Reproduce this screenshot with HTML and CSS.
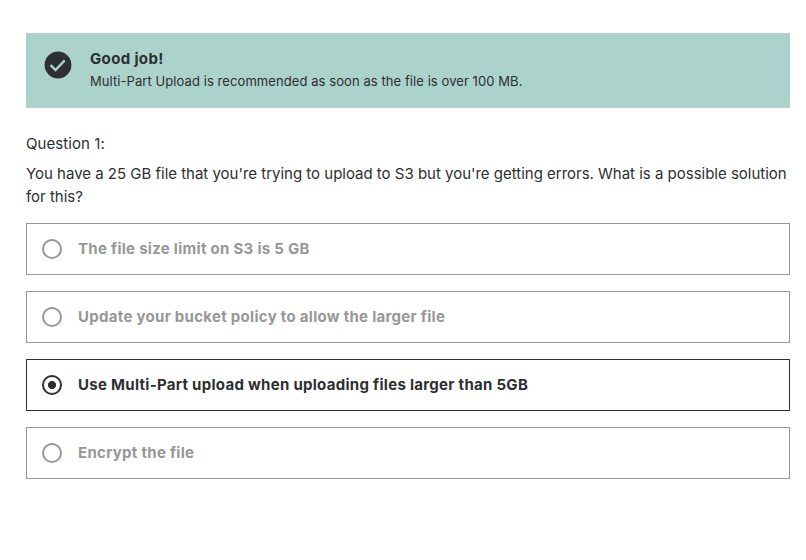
FILE: index.html
```html
<!DOCTYPE html>
<html lang="en">
<head>
<meta charset="utf-8">
<title>Quiz</title>
<link rel="stylesheet" href="styles.css">
</head>
<body>
<main class="quiz">
  <section class="alert">
    <svg class="alert-icon" viewBox="0 0 28 28"><circle cx="14" cy="14" r="13.4"/><path d="M6.6 14.1l4.9 5 9.2-9.700"/></svg>
    <div>
      <h2 class="alert-title">Good job!</h2>
      <p class="alert-text">Multi-Part Upload is recommended as soon as the file is over 100 MB.</p>
    </div>
  </section>
  <p class="label">Question 1:</p>
  <p class="question">You have a 25 GB file that you're trying to upload to S3 but you're getting errors. What is a possible solution<br>for this?</p>
  <ul class="options">
    <li class="option"><span class="radio"></span><span class="answer">The file size limit on S3 is 5 GB</span></li>
    <li class="option"><span class="radio"></span><span class="answer">Update your bucket policy to allow the larger file</span></li>
    <li class="option selected"><span class="radio"></span><span class="answer">Use Multi-Part upload when uploading files larger than 5GB</span></li>
    <li class="option"><span class="radio"></span><span class="answer">Encrypt the file</span></li>
  </ul>
</main>
</body>
</html>
```
FILE: styles.css
```css
* { box-sizing: border-box; margin: 0; padding: 0; }
body { background: #fff; color: #2d2f31; font-family: Inter, "Liberation Sans", sans-serif; font-size: 15px; }
.quiz { padding: 33px 16px 0 26px; }
.alert { display: flex; height: 75px; padding: 15px 18px; gap: 18px; background: #acd2cc; }
.alert-icon { width: 28px; height: 28px; margin-top: 3px; flex: none; }
.alert-icon circle { fill: #2d2f31; }
.alert-icon path { fill: none; stroke: #acd2cc; stroke-width: 2.3; }
.alert-title { font-size: 15px; line-height: 22px; font-weight: 700; letter-spacing: 0.35px; }
.alert-text { font-size: 13px; line-height: 22px; letter-spacing: 0.075px; }
.label { margin-top: 24px; line-height: 23px; letter-spacing: 0.08px; }
.question { margin-top: 7px; line-height: 23px; letter-spacing: -0.01px; white-space: nowrap; }
.options { list-style: none; display: grid; gap: 16px; margin-top: 15px; }
.option { display: flex; align-items: center; gap: 16px; height: 52px; padding: 0 15px; border: 1px solid #979797; color: #979797; font-weight: 700; letter-spacing: 0.29px; }
.answer { padding-bottom: 2px; }
.radio { width: 20px; height: 20px; border: 2px solid #979797; border-radius: 50%; flex: none; }
.selected { border-color: #2d2f31; color: #2d2f31; }
.selected .radio { border-color: #2d2f31; background: radial-gradient(circle, #2d2f31 3.700px, transparent 4.4px); }
```
